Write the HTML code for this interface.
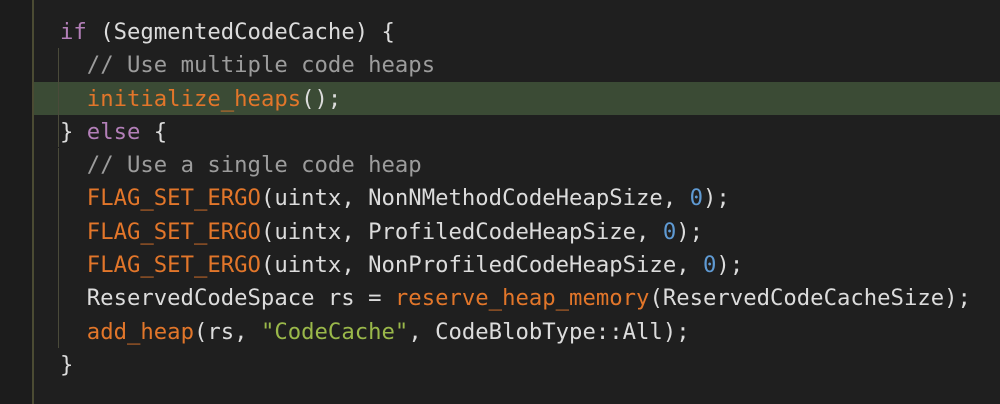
<!DOCTYPE html>
<html><head><style>
html,body{margin:0;padding:0;}
body{width:1000px;height:404px;background:#1f1f1f;position:relative;overflow:hidden;font-family:"DejaVu Sans Mono","Liberation Mono",monospace;font-size:22.25px;}
.gut{position:absolute;left:0;top:0;width:32px;height:404px;background:#1c1c1c;}
.vl{position:absolute;left:32px;top:0;width:2px;height:404px;background:#4b4b33;}
.hl{position:absolute;left:34px;top:82px;width:966px;height:33px;background:#3b4b35;}
.g{position:absolute;left:58px;width:1px;background:#4a4a3a;}
.code{position:absolute;left:60px;top:16px;line-height:33.3px;color:#dcdcdc;white-space:pre;}
.k{color:#b37fb8}.f{color:#e2762a}.c{color:#9c9c9c}.n{color:#5f9ad3}.s{color:#9ab84a}
</style></head><body>
<div class="gut"></div><div class="hl"></div><div class="vl"></div>
<div class="g" style="top:48px;height:99px"></div>
<div class="g" style="top:148px;height:200px"></div>
<div class="code"><span class="k">if</span> (SegmentedCodeCache) {
  <span class="c">// Use multiple code heaps</span>
  <span class="f">initialize_heaps</span>();
} <span class="k">else</span> {
  <span class="c">// Use a single code heap</span>
  <span class="f">FLAG_SET_ERGO</span>(uintx, NonNMethodCodeHeapSize, <span class="n">0</span>);
  <span class="f">FLAG_SET_ERGO</span>(uintx, ProfiledCodeHeapSize, <span class="n">0</span>);
  <span class="f">FLAG_SET_ERGO</span>(uintx, NonProfiledCodeHeapSize, <span class="n">0</span>);
  ReservedCodeSpace rs = <span class="f">reserve_heap_memory</span>(ReservedCodeCacheSize);
  <span class="f">add_heap</span>(rs, <span class="s">"CodeCache"</span>, CodeBlobType::All);
}</div>
</body></html>
